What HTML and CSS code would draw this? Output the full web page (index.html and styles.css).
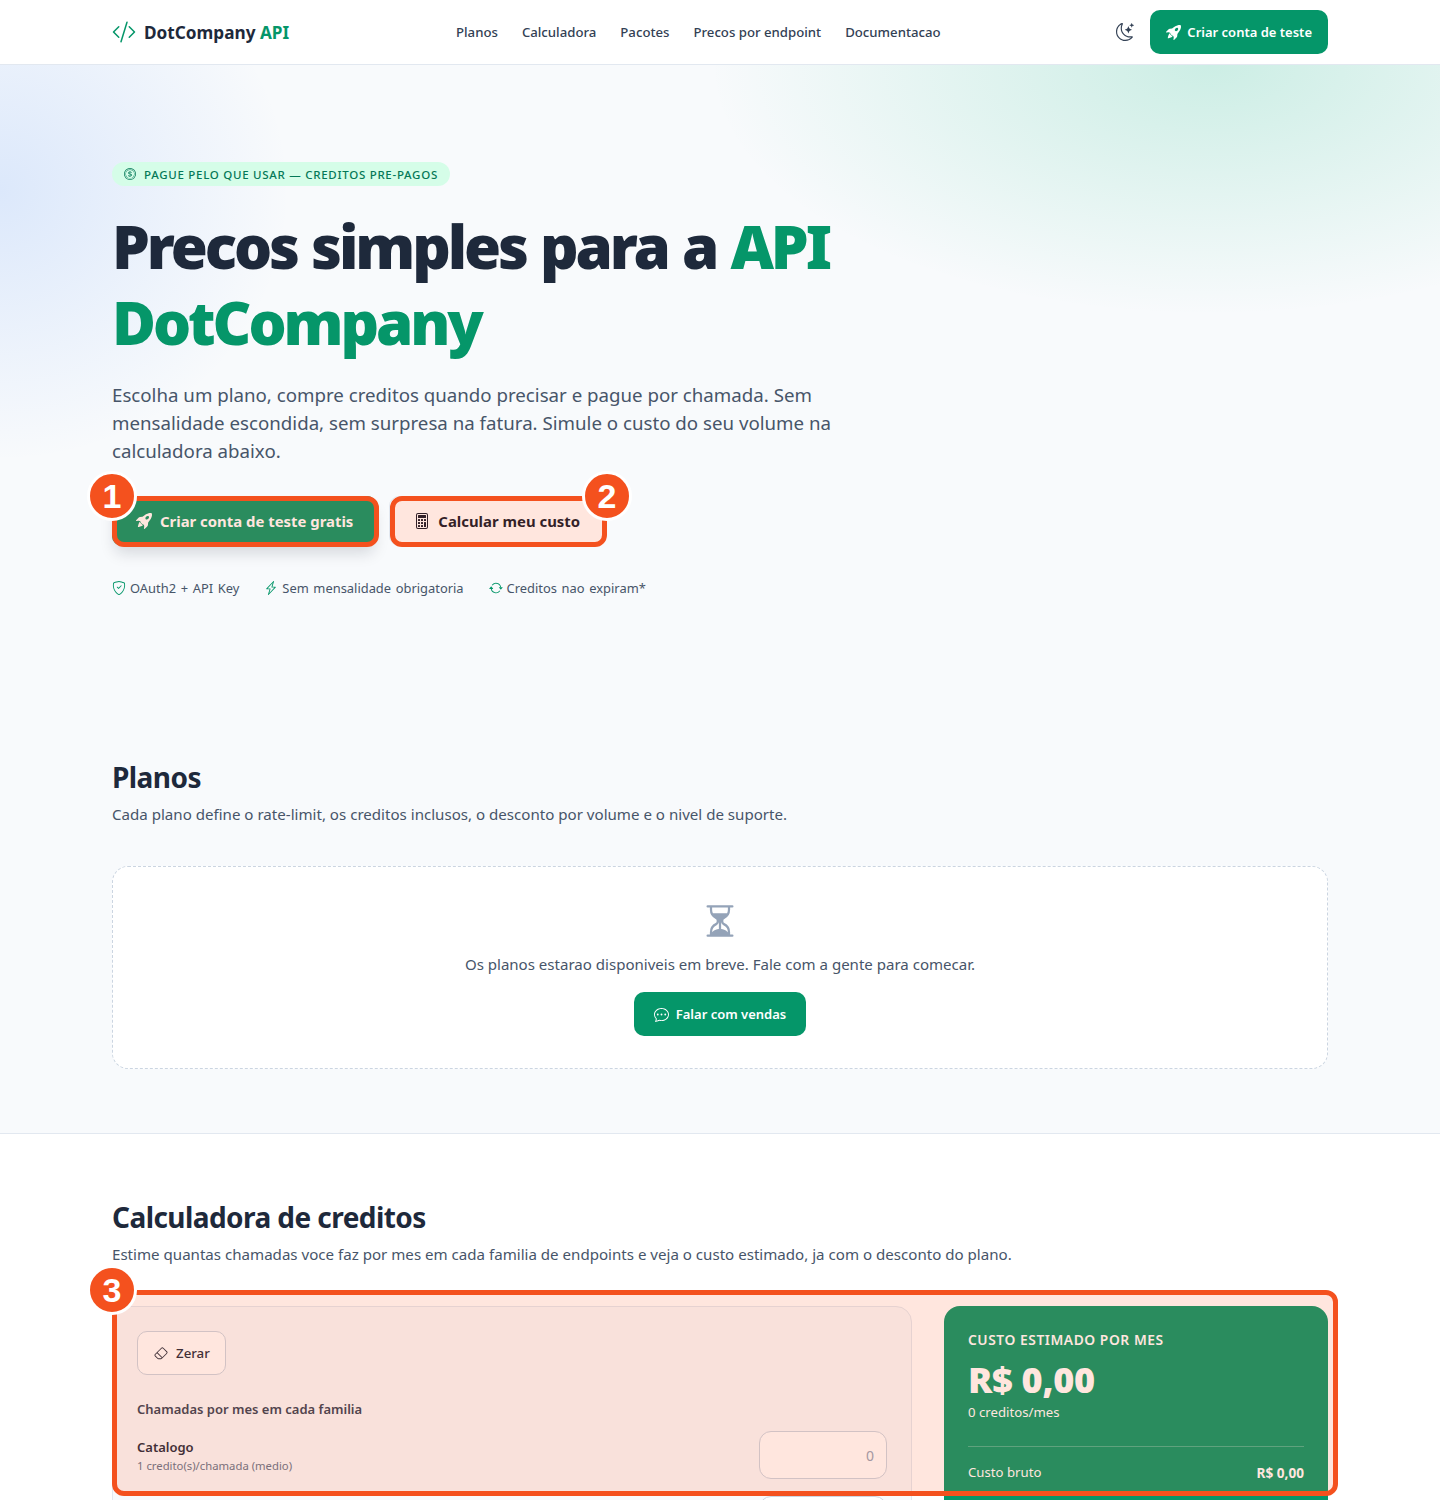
FILE: index.html
```html
<!DOCTYPE html>
<html lang="pt-BR">
<head>
  <meta charset="UTF-8">
  <title>Precos - DotCompany API</title>
  <link rel="stylesheet" href="styles.css">
</head>
<body>

  <header class="topbar">
    <div class="wrap topbar-row">
      <a class="brand" href="#">
        <svg class="brand-icon" viewBox="0 0 16 16" fill="currentColor"><path d="M10.478 1.647a.5.5 0 1 0-.956-.294l-4 13a.5.5 0 0 0 .956.294zM4.854 4.146a.5.5 0 0 1 0 .708L1.707 8l3.147 3.146a.5.5 0 0 1-.708.708l-3.5-3.5a.5.5 0 0 1 0-.708l3.5-3.5a.5.5 0 0 1 .708 0m6.292 0a.5.5 0 0 0 0 .708L14.293 8l-3.147 3.146a.5.5 0 0 0 .708.708l3.5-3.5a.5.5 0 0 0 0-.708l-3.5-3.5a.5.5 0 0 0-.708 0"/></svg>
        <span>DotCompany <em>API</em></span>
      </a>
      <nav class="nav">
        <a href="#">Planos</a>
        <a href="#">Calculadora</a>
        <a href="#">Pacotes</a>
        <a href="#">Precos por endpoint</a>
        <a href="#">Documentacao</a>
      </nav>
      <div class="topbar-actions">
        <svg class="theme-icon" viewBox="0 0 16 16" fill="currentColor"><path d="M6 .278a.77.77 0 0 1 .08.858 7.2 7.2 0 0 0-.878 3.46c0 4.021 3.278 7.277 7.318 7.277q.792-.001 1.533-.16a.79.79 0 0 1 .81.316.73.73 0 0 1-.031.893A8.35 8.35 0 0 1 8.344 16C3.734 16 0 12.286 0 7.71 0 4.266 2.114 1.312 5.124.06A.75.75 0 0 1 6 .278M4.858 1.311A7.27 7.27 0 0 0 1.025 7.71c0 4.02 3.279 7.276 7.319 7.276a7.32 7.32 0 0 0 5.205-2.162q-.506.063-1.029.063c-4.61 0-8.343-3.714-8.343-8.29 0-1.167.242-2.278.681-3.286"/><path d="M10.794 3.148a.217.217 0 0 1 .412 0l.387 1.162c.173.518.579.924 1.097 1.097l1.162.387a.217.217 0 0 1 0 .412l-1.162.387a1.73 1.73 0 0 0-1.097 1.097l-.387 1.162a.217.217 0 0 1-.412 0l-.387-1.162A1.73 1.73 0 0 0 9.31 6.593l-1.162-.387a.217.217 0 0 1 0-.412l1.162-.387a1.73 1.73 0 0 0 1.097-1.097zM13.863.099a.145.145 0 0 1 .274 0l.258.774c.115.346.386.617.732.732l.774.258a.145.145 0 0 1 0 .274l-.774.258a1.16 1.16 0 0 0-.732.732l-.258.774a.145.145 0 0 1-.274 0l-.258-.774a1.16 1.16 0 0 0-.732-.732l-.774-.258a.145.145 0 0 1 0-.274l.774-.258c.346-.115.617-.386.732-.732z"/></svg>
        <a class="btn btn-green btn-top" href="#">
          <svg class="icon" viewBox="0 0 16 16" fill="currentColor"><path d="M12.17 9.53c2.307-2.592 3.278-4.684 3.641-6.218.21-.887.214-1.58.16-2.065a3.6 3.6 0 0 0-.108-.563 2 2 0 0 0-.078-.23V.453c-.073-.164-.168-.234-.352-.295a2 2 0 0 0-.16-.045 4 4 0 0 0-.57-.093c-.49-.044-1.19-.03-2.08.188-1.536.374-3.618 1.343-6.161 3.604l-2.4.238h-.006a2.55 2.55 0 0 0-1.524.734L.15 7.17a.512.512 0 0 0 .433.868l1.896-.271c.28-.04.592.013.955.132.232.076.437.16.655.248l.203.083c.196.816.66 1.58 1.275 2.195.613.614 1.376 1.08 2.191 1.277l.082.202c.089.218.173.424.249.657.118.363.172.676.132.956l-.271 1.9a.512.512 0 0 0 .867.433l2.382-2.386c.41-.41.668-.949.732-1.526zm.11-3.699c-.797.8-1.93.961-2.528.362-.598-.6-.436-1.733.361-2.532.798-.799 1.93-.96 2.528-.361s.437 1.732-.36 2.531Z"/><path d="M5.205 10.787a7.6 7.6 0 0 0 1.804 1.352c-1.118 1.007-4.929 2.028-5.054 1.903-.126-.127.737-4.189 1.839-5.18.346.69.837 1.35 1.411 1.925"/></svg>
          Criar conta de teste
        </a>
      </div>
    </div>
  </header>

  <section class="hero">
    <div class="wrap">
      <span class="pill">
        <svg class="pill-icon" viewBox="0 0 16 16" fill="currentColor"><path d="M5.5 9.511c.076.954.83 1.697 2.182 1.785V12h.6v-.709c1.4-.098 2.218-.846 2.218-1.932 0-.987-.626-1.496-1.745-1.76l-.473-.112V5.57c.6.068.982.396 1.074.85h1.052c-.076-.919-.864-1.638-2.126-1.716V4h-.6v.719c-1.195.117-2.01.836-2.01 1.853 0 .9.606 1.472 1.613 1.707l.397.098v2.034c-.615-.093-1.022-.43-1.114-.9zm2.177-2.166c-.59-.137-.91-.416-.91-.836 0-.47.345-.822.915-.925v1.76h-.005zm.692 1.193c.717.166 1.048.435 1.048.91 0 .542-.412.914-1.135.982V8.518z"/><path d="M8 15A7 7 0 1 1 8 1a7 7 0 0 1 0 14m0 1A8 8 0 1 0 8 0a8 8 0 0 0 0 16"/><path d="M8 13.5a5.5 5.5 0 1 1 0-11 5.5 5.5 0 0 1 0 11m0 .5A6 6 0 1 0 8 2a6 6 0 0 0 0 12"/></svg>
        Pague pelo que usar — creditos pre-pagos
      </span>
      <h1 class="hero-title">Precos simples para a <em>API DotCompany</em></h1>
      <p class="hero-lead">Escolha um plano, compre creditos quando precisar e pague por chamada. Sem mensalidade escondida, sem surpresa na fatura. Simule o custo do seu volume na calculadora abaixo.</p>
      <div class="hero-buttons">
        <a class="btn btn-green btn-big btn-lift" href="#">
          <svg class="icon" viewBox="0 0 16 16" fill="currentColor"><path d="M12.17 9.53c2.307-2.592 3.278-4.684 3.641-6.218.21-.887.214-1.58.16-2.065a3.6 3.6 0 0 0-.108-.563 2 2 0 0 0-.078-.23V.453c-.073-.164-.168-.234-.352-.295a2 2 0 0 0-.16-.045 4 4 0 0 0-.57-.093c-.49-.044-1.19-.03-2.08.188-1.536.374-3.618 1.343-6.161 3.604l-2.4.238h-.006a2.55 2.55 0 0 0-1.524.734L.15 7.17a.512.512 0 0 0 .433.868l1.896-.271c.28-.04.592.013.955.132.232.076.437.16.655.248l.203.083c.196.816.66 1.58 1.275 2.195.613.614 1.376 1.08 2.191 1.277l.082.202c.089.218.173.424.249.657.118.363.172.676.132.956l-.271 1.9a.512.512 0 0 0 .867.433l2.382-2.386c.41-.41.668-.949.732-1.526zm.11-3.699c-.797.8-1.93.961-2.528.362-.598-.6-.436-1.733.361-2.532.798-.799 1.93-.96 2.528-.361s.437 1.732-.36 2.531Z"/><path d="M5.205 10.787a7.6 7.6 0 0 0 1.804 1.352c-1.118 1.007-4.929 2.028-5.054 1.903-.126-.127.737-4.189 1.839-5.18.346.69.837 1.35 1.411 1.925"/></svg>
          Criar conta de teste gratis
        </a>
        <a class="btn btn-big btn-light" href="#">
          <svg class="icon" viewBox="0 0 16 16" fill="currentColor"><path d="M12 1a1 1 0 0 1 1 1v12a1 1 0 0 1-1 1H4a1 1 0 0 1-1-1V2a1 1 0 0 1 1-1zM4 0a2 2 0 0 0-2 2v12a2 2 0 0 0 2 2h8a2 2 0 0 0 2-2V2a2 2 0 0 0-2-2z"/><path d="M4 2.5a.5.5 0 0 1 .5-.5h7a.5.5 0 0 1 .5.5v2a.5.5 0 0 1-.5.5h-7a.5.5 0 0 1-.5-.5zm0 4a.5.5 0 0 1 .5-.5h1a.5.5 0 0 1 .5.5v1a.5.5 0 0 1-.5.5h-1a.5.5 0 0 1-.5-.5zm0 3a.5.5 0 0 1 .5-.5h1a.5.5 0 0 1 .5.5v1a.5.5 0 0 1-.5.5h-1a.5.5 0 0 1-.5-.5zm0 3a.5.5 0 0 1 .5-.5h1a.5.5 0 0 1 .5.5v1a.5.5 0 0 1-.5.5h-1a.5.5 0 0 1-.5-.5zm3-6a.5.5 0 0 1 .5-.5h1a.5.5 0 0 1 .5.5v1a.5.5 0 0 1-.5.5h-1a.5.5 0 0 1-.5-.5zm0 3a.5.5 0 0 1 .5-.5h1a.5.5 0 0 1 .5.5v1a.5.5 0 0 1-.5.5h-1a.5.5 0 0 1-.5-.5zm0 3a.5.5 0 0 1 .5-.5h1a.5.5 0 0 1 .5.5v1a.5.5 0 0 1-.5.5h-1a.5.5 0 0 1-.5-.5zm3-6a.5.5 0 0 1 .5-.5h1a.5.5 0 0 1 .5.5v1a.5.5 0 0 1-.5.5h-1a.5.5 0 0 1-.5-.5zm0 3a.5.5 0 0 1 .5-.5h1a.5.5 0 0 1 .5.5v4a.5.5 0 0 1-.5.5h-1a.5.5 0 0 1-.5-.5z"/></svg>
          Calcular meu custo
        </a>
      </div>
      <ul class="trust">
        <li>
          <svg class="trust-icon" viewBox="0 0 16 16" fill="currentColor"><path d="M5.338 1.59a61 61 0 0 0-2.837.856.48.48 0 0 0-.328.39c-.554 4.157.726 7.19 2.253 9.188a10.7 10.7 0 0 0 2.287 2.233c.346.244.652.42.893.533q.18.085.293.118a1 1 0 0 0 .101.025 1 1 0 0 0 .1-.025q.114-.034.294-.118c.24-.113.547-.29.893-.533a10.7 10.7 0 0 0 2.287-2.233c1.527-1.997 2.807-5.031 2.253-9.188a.48.48 0 0 0-.328-.39c-.651-.213-1.75-.56-2.837-.855C9.552 1.29 8.531 1.067 8 1.067c-.53 0-1.552.223-2.662.524zM5.072.56C6.157.265 7.31 0 8 0s1.843.265 2.928.56c1.11.3 2.229.655 2.887.87a1.54 1.54 0 0 1 1.044 1.262c.596 4.477-.787 7.795-2.465 9.99a11.8 11.8 0 0 1-2.517 2.453 7 7 0 0 1-1.048.625c-.28.132-.581.24-.829.24s-.548-.108-.829-.24a7 7 0 0 1-1.048-.625 11.8 11.8 0 0 1-2.517-2.453C1.928 10.487.545 7.169 1.141 2.692A1.54 1.54 0 0 1 2.185 1.43 63 63 0 0 1 5.072.56"/><path d="M10.854 5.146a.5.5 0 0 1 0 .708l-3 3a.5.5 0 0 1-.708 0l-1.5-1.5a.5.5 0 1 1 .708-.708L7.5 7.793l2.646-2.647a.5.5 0 0 1 .708 0"/></svg>
          OAuth2 + API Key
        </li>
        <li>
          <svg class="trust-icon" viewBox="0 0 16 16" fill="currentColor"><path d="M11.251.068a.5.5 0 0 1 .227.58L9.677 6.5H13a.5.5 0 0 1 .364.843l-8 8.5a.5.5 0 0 1-.842-.49L6.323 9.5H3a.5.5 0 0 1-.364-.843l8-8.5a.5.5 0 0 1 .615-.09zM4.157 8.5H7a.5.5 0 0 1 .478.647L6.11 13.59l5.732-6.09H9a.5.5 0 0 1-.478-.647L9.89 2.41z"/></svg>
          Sem mensalidade obrigatoria
        </li>
        <li>
          <svg class="trust-icon" viewBox="0 0 16 16" fill="currentColor"><path d="M11.534 7h3.932a.25.25 0 0 1 .192.41l-1.966 2.36a.25.25 0 0 1-.384 0l-1.966-2.36a.25.25 0 0 1 .192-.41m-11 2h3.932a.25.25 0 0 0 .192-.41L2.692 6.23a.25.25 0 0 0-.384 0L.342 8.59A.25.25 0 0 0 .534 9"/><path d="M8 3c-1.552 0-2.94.707-3.857 1.818a.5.5 0 1 1-.771-.636A6.002 6.002 0 0 1 13.917 7H12.9A5 5 0 0 0 8 3M3.1 9a5.002 5.002 0 0 0 8.757 2.182.5.5 0 1 1 .771.636A6.002 6.002 0 0 1 2.083 9z"/></svg>
          Creditos nao expiram*
        </li>
      </ul>
    </div>
  </section>

  <section class="section section-plans">
    <div class="wrap">
      <h2 class="section-title">Planos</h2>
      <p class="section-sub">Cada plano define o rate-limit, os creditos inclusos, o desconto por volume e o nivel de suporte.</p>
      <div class="empty-card">
        <svg class="empty-icon" viewBox="0 0 16 16" fill="currentColor"><path d="M2.5 15a.5.5 0 1 1 0-1h1v-1a4.5 4.5 0 0 1 2.557-4.06c.29-.139.443-.377.443-.59v-.7c0-.213-.154-.451-.443-.59A4.5 4.5 0 0 1 3.5 3V2h-1a.5.5 0 0 1 0-1h11a.5.5 0 0 1 0 1h-1v1a4.5 4.5 0 0 1-2.557 4.06c-.29.139-.443.377-.443.59v.7c0 .213.154.451.443.59A4.5 4.5 0 0 1 12.5 13v1h1a.5.5 0 0 1 0 1zm2-13v1c0 .537.12 1.045.337 1.5h6.326c.216-.455.337-.963.337-1.5V2zm3 6.35c0 .701-.478 1.236-1.011 1.492A3.5 3.5 0 0 0 4.5 13s.866-1.299 3-1.48zm1 0v3.17c2.134.181 3 1.48 3 1.48a3.5 3.5 0 0 0-1.989-3.158C8.978 9.586 8.5 9.052 8.5 8.351z"/></svg>
        <p class="empty-text">Os planos estarao disponiveis em breve. Fale com a gente para comecar.</p>
        <a class="btn btn-green btn-wide" href="#">
          <svg class="icon" viewBox="0 0 16 16" fill="currentColor"><path d="M5 8a1 1 0 1 1-2 0 1 1 0 0 1 2 0m4 0a1 1 0 1 1-2 0 1 1 0 0 1 2 0m3 1a1 1 0 1 0 0-2 1 1 0 0 0 0 2"/><path d="m2.165 15.803.02-.004c1.83-.363 2.948-.842 3.468-1.105A9 9 0 0 0 8 15c4.418 0 8-3.134 8-7s-3.582-7-8-7-8 3.134-8 7c0 1.76.743 3.37 1.97 4.6a10.4 10.4 0 0 1-.524 2.318l-.003.011a11 11 0 0 1-.244.637c-.079.186.074.394.273.362a22 22 0 0 0 .693-.125m.8-3.108a1 1 0 0 0-.287-.801C1.618 10.83 1 9.468 1 8c0-3.192 3.004-6 7-6s7 2.808 7 6-3.004 6-7 6a8 8 0 0 1-2.088-.272 1 1 0 0 0-.711.074c-.387.196-1.24.57-2.634.893a11 11 0 0 0 .398-2"/></svg>
          Falar com vendas
        </a>
      </div>
    </div>
  </section>

  <section class="section section-calc">
    <div class="wrap">
      <h2 class="section-title">Calculadora de creditos</h2>
      <p class="section-sub">Estime quantas chamadas voce faz por mes em cada familia de endpoints e veja o custo estimado, ja com o desconto do plano.</p>
      <div class="calc-grid">
        <div class="calc-form">
          <button class="btn-reset" type="button">
            <svg class="reset-icon" viewBox="0 0 16 16" fill="currentColor"><path d="M8.086 2.207a2 2 0 0 1 2.828 0l3.879 3.879a2 2 0 0 1 0 2.828l-5.5 5.5A2 2 0 0 1 7.879 15H5.12a2 2 0 0 1-1.414-.586l-2.5-2.5a2 2 0 0 1 0-2.828zm2.121.707a1 1 0 0 0-1.414 0L4.16 7.547l5.293 5.293 4.633-4.633a1 1 0 0 0 0-1.414zM8.746 13.547 3.453 8.254 1.914 9.793a1 1 0 0 0 0 1.414l2.5 2.5a1 1 0 0 0 .707.293H7.88a1 1 0 0 0 .707-.293z"/></svg>
            Zerar
          </button>
          <p class="calc-label">Chamadas por mes em cada familia</p>
          <div class="calc-row">
            <div>
              <div class="calc-name">Catalogo</div>
              <div class="calc-rate">1 credito(s)/chamada (medio)</div>
            </div>
            <input class="calc-input" type="text" placeholder="0">
          </div>
          <div class="calc-row">
            <div></div>
            <input class="calc-input" type="text">
          </div>
        </div>
        <aside class="calc-total">
          <div class="total-label">Custo estimado por mes</div>
          <div class="total-value">R$ 0,00</div>
          <div class="total-credits">0 creditos/mes</div>
          <div class="total-line">
            <span>Custo bruto</span>
            <strong>R$ 0,00</strong>
          </div>
        </aside>
      </div>
    </div>
  </section>

  <!-- marcacoes por cima da pagina -->
  <div class="mark mark-one"><span class="mark-num">1</span></div>
  <div class="mark mark-two"><span class="mark-num">2</span></div>
  <div class="mark mark-three"><span class="mark-num">3</span></div>

</body>
</html>
```

FILE: styles.css
```css
* {
  box-sizing: border-box;
}

html,
body {
  height: 1500px;
  overflow: hidden;
}

body {
  position: relative;
  margin: 0;
  background: #f8fafc;
  color: #1e293b;
  font-family: "Noto Sans", sans-serif;
}

a {
  color: inherit;
  text-decoration: none;
}

.wrap {
  max-width: 1280px;
  margin: 0 auto;
  padding: 0 32px;
}

/* topo */
.topbar {
  background: #fff;
  border-bottom: 1px solid #e2e8f0;
}

.topbar-row {
  display: flex;
  align-items: center;
  height: 64px;
}

.brand {
  display: flex;
  align-items: center;
  gap: 8px;
  width: 344px;
  font-size: 17.2px;
  font-weight: 700;
}

.brand em {
  font-style: normal;
  color: #059669;
}

.brand-icon {
  width: 24px;
  height: 24px;
  color: #059669;
}

.nav {
  display: flex;
  gap: 24px;
  font-size: 13.2px;
  font-weight: 500;
  color: #334155;
}

.topbar-actions {
  display: flex;
  align-items: center;
  gap: 16px;
  margin-left: auto;
}

.theme-icon {
  width: 18px;
  height: 18px;
  color: #334155;
}

.btn {
  display: inline-flex;
  align-items: center;
  gap: 7px;
  height: 44px;
  padding: 0 16px;
  border-radius: 10px;
  font-size: 13px;
  font-weight: 600;
}

.btn-green {
  background: #059669;
  color: #fff;
}

.btn-top {
  gap: 6px;
}

.btn-wide {
  padding: 0 20px;
}

.icon {
  width: 15px;
  height: 15px;
}

/* hero */
.hero {
  height: 630px;
  padding-top: 97px;
  background:
    radial-gradient(500px 250px at 1210px 0, rgba(16, 185, 129, 0.19), transparent 100%),
    radial-gradient(290px 270px at 0 126px, rgba(59, 130, 246, 0.15), transparent 100%),
    #f8fafc;
}

.pill {
  display: inline-flex;
  align-items: center;
  gap: 8px;
  height: 24px;
  padding: 0 12px;
  border-radius: 999px;
  background: #d5fde8;
  color: #047857;
  font-size: 11.5px;
  font-weight: 500;
  letter-spacing: 0.72px;
  text-transform: uppercase;
}

.pill-icon {
  width: 12px;
  height: 12px;
}

.hero-title {
  max-width: 800px;
  margin: 22px 0 0;
  font-size: 60px;
  font-weight: 900;
  line-height: 76px;
  letter-spacing: -3.1px;
  word-spacing: 1.6px;
}

.hero-title em {
  font-style: normal;
  color: #059669;
}

.hero-lead {
  max-width: 720px;
  margin: 21px 0 0;
  font-size: 18.7px;
  line-height: 28px;
  color: #475569;
}

.hero-buttons {
  display: flex;
  gap: 12px;
  margin-top: 31px;
}

.btn-big {
  height: 50px;
  padding: 0 24px;
  gap: 8px;
  font-size: 14.9px;
  font-weight: 700;
}

.btn-big .icon {
  width: 16px;
  height: 16px;
}

.btn-lift {
  box-shadow: 0 10px 15px -3px rgba(15, 23, 42, 0.15);
}

.btn-light {
  background: #fff;
  color: #0f172a;
  border: 1px solid #e2e8f0;
}

.trust {
  display: flex;
  gap: 25px;
  margin: 33px 0 0;
  padding: 0;
  list-style: none;
  font-size: 12.9px;
  word-spacing: 1.3px;
  color: #475569;
}

.trust li {
  display: flex;
  align-items: center;
  gap: 4px;
}

.trust-icon {
  width: 14px;
  height: 14px;
  color: #059669;
}

/* secoes */
.section {
  padding: 64px 0;
}

.section-plans {
  background: #f8fafc;
  border-bottom: 1px solid #e2e8f0;
}

.section-calc {
  padding-top: 65px;
  background: #fff;
}

.section-title {
  margin: 0;
  font-size: 28px;
  font-weight: 700;
  line-height: 36px;
  letter-spacing: -0.02em;
}

.section-sub {
  margin: 8px 0 0;
  font-size: 15.1px;
  line-height: 22px;
  color: #475569;
}

.empty-card {
  display: flex;
  flex-direction: column;
  align-items: center;
  margin-top: 41px;
  padding: 36px 32px 32px;
  background: #fff;
  border: 1px dashed #cbd5e1;
  border-radius: 16px;
}

.empty-icon {
  width: 36px;
  height: 36px;
  color: #94a3b8;
}

.empty-text {
  margin: 14px 0 17px;
  font-size: 15.05px;
  line-height: 22px;
  color: #475569;
}

/* calculadora */
.calc-grid {
  display: grid;
  grid-template-columns: 1fr 384px;
  gap: 32px;
  margin-top: 41px;
}

.calc-form {
  padding: 24px;
  background: #f8fafc;
  border: 1px solid #e2e8f0;
  border-radius: 16px;
}

.btn-reset {
  display: inline-flex;
  align-items: center;
  gap: 8px;
  height: 44px;
  padding: 0 15px 0 16px;
  background: #fff;
  border: 1px solid #cbd5e1;
  border-radius: 10px;
  color: #1e293b;
  font: 500 13.3px "Noto Sans", sans-serif;
}

.reset-icon {
  width: 14px;
  height: 14px;
}

.calc-label {
  margin: 24px 0 0;
  font-size: 13px;
  font-weight: 600;
  line-height: 20px;
  color: #334155;
}

.calc-row {
  display: flex;
  align-items: center;
  justify-content: space-between;
  margin-top: 12px;
}

.calc-row + .calc-row {
  margin-top: 17px;
}

.calc-name {
  font-size: 13px;
  font-weight: 600;
}

.calc-rate {
  margin-top: 2px;
  font-size: 11.3px;
  color: #64748b;
}

.calc-input {
  width: 128px;
  height: 48px;
  padding: 0 12px;
  background: #fff;
  border: 1px solid #cbd5e1;
  border-radius: 12px;
  text-align: right;
  font: 400 14px "Noto Sans", sans-serif;
}

.calc-input::placeholder {
  color: #94a3b8;
}

.calc-total {
  height: 400px;
  padding: 24px;
  background: #059669;
  border-radius: 16px;
  color: #fff;
}

.total-label {
  font-size: 13.8px;
  font-weight: 600;
  line-height: 20px;
  letter-spacing: 0.04em;
  text-transform: uppercase;
}

.total-value {
  margin-top: 8px;
  font-size: 36px;
  font-weight: 900;
  line-height: 44px;
  letter-spacing: -0.3px;
}

.total-credits {
  font-size: 13.2px;
  line-height: 20px;
}

.total-line {
  display: flex;
  justify-content: space-between;
  margin-top: 24px;
  padding-top: 16px;
  border-top: 1px solid rgba(255, 255, 255, 0.25);
  font-size: 13.2px;
}

.total-line strong {
  font-size: 13.6px;
  font-weight: 700;
}

/* marcacoes numeradas */
.mark {
  position: absolute;
  border: 5px solid #f4511e;
  border-radius: 12px;
  background: rgba(255, 87, 34, 0.15);
}

.mark-one {
  left: 112px;
  top: 496px;
  width: 267px;
  height: 51px;
}

.mark-two {
  left: 390px;
  top: 496px;
  width: 217px;
  height: 51px;
}

.mark-three {
  left: 112px;
  top: 1290px;
  width: 1226px;
  height: 206px;
}

.mark-num {
  position: absolute;
  left: -30px;
  top: -30px;
  display: flex;
  align-items: center;
  justify-content: center;
  width: 50px;
  height: 50px;
  border: 3px solid #fff;
  border-radius: 50%;
  background: #f4511e;
  color: #fff;
  font: 700 34px "Liberation Sans", sans-serif;
}

.mark-two .mark-num {
  left: auto;
  right: -30px;
}
```
